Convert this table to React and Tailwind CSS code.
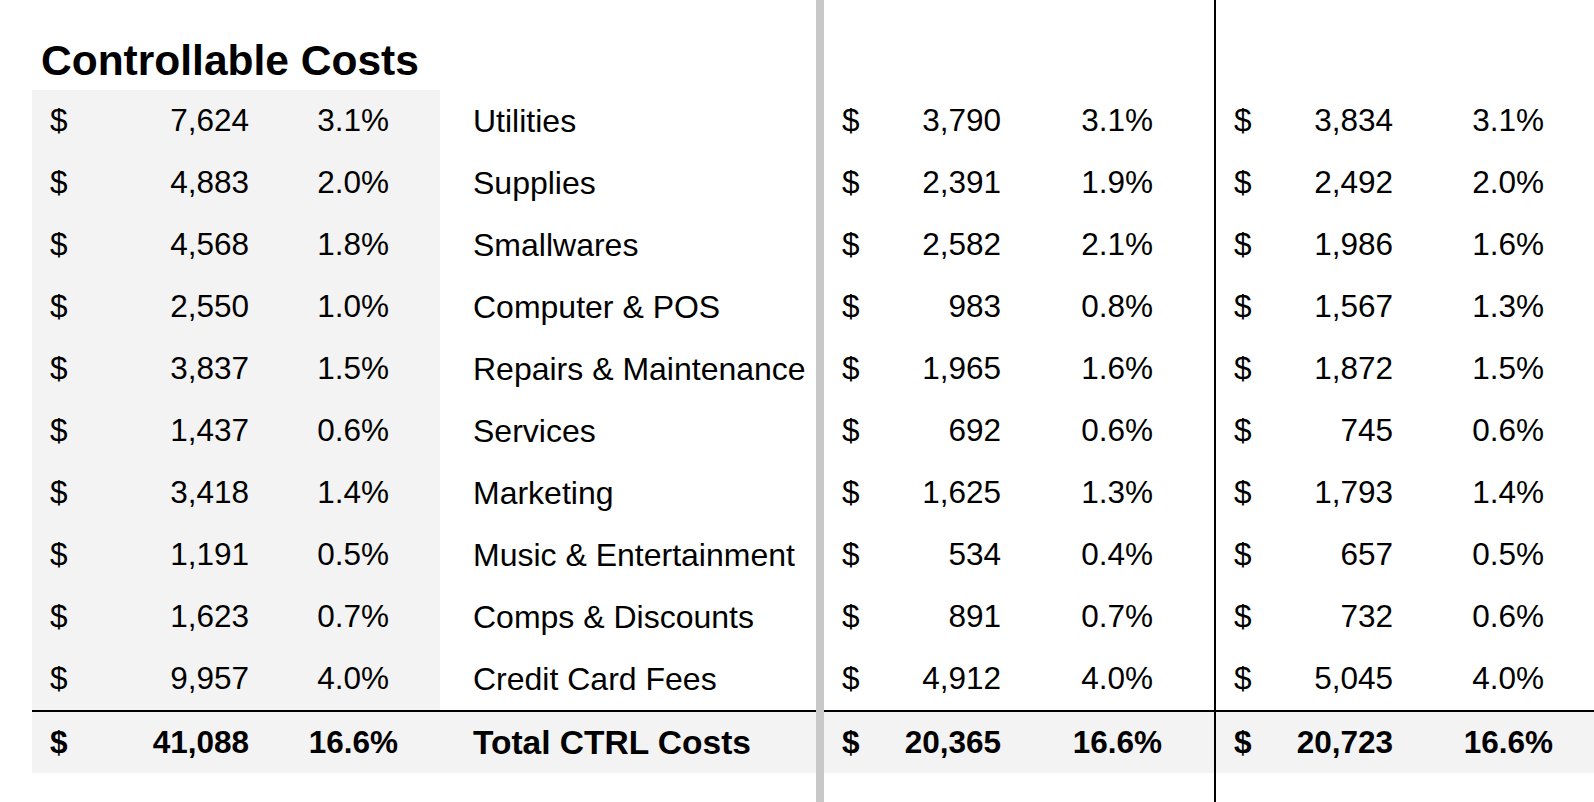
const rows = [
  ["7,624", "3.1%", "Utilities", "3,790", "3.1%", "3,834", "3.1%"],
  ["4,883", "2.0%", "Supplies", "2,391", "1.9%", "2,492", "2.0%"],
  ["4,568", "1.8%", "Smallwares", "2,582", "2.1%", "1,986", "1.6%"],
  ["2,550", "1.0%", "Computer & POS", "983", "0.8%", "1,567", "1.3%"],
  ["3,837", "1.5%", "Repairs & Maintenance", "1,965", "1.6%", "1,872", "1.5%"],
  ["1,437", "0.6%", "Services", "692", "0.6%", "745", "0.6%"],
  ["3,418", "1.4%", "Marketing", "1,625", "1.3%", "1,793", "1.4%"],
  ["1,191", "0.5%", "Music & Entertainment", "534", "0.4%", "657", "0.5%"],
  ["1,623", "0.7%", "Comps & Discounts", "891", "0.7%", "732", "0.6%"],
  ["9,957", "4.0%", "Credit Card Fees", "4,912", "4.0%", "5,045", "4.0%"],
];

const total = ["41,088", "16.6%", "Total CTRL Costs", "20,365", "16.6%", "20,723", "16.6%"];

function Money({ amount, pct, numW, pctW, bold }) {
  return (
    <>
      <div className="w-[18px] shrink-0" />
      <div className={bold ? "w-[40px] font-bold" : "w-[40px]"}>$</div>
      <div className={`text-right ${bold ? "font-bold" : ""}`} style={{ width: numW }}>
        {amount}
      </div>
      <div className={`text-right ${bold ? "font-bold" : ""}`} style={{ width: pctW }}>
        {pct}
      </div>
    </>
  );
}

export default function App() {
  return (
    <div
      className="h-[802px] w-[1594px] overflow-hidden bg-white text-black text-[31.5px] leading-none flex"
      style={{ fontFamily: '"Liberation Sans", Arial, sans-serif' }}
    >
      {/* left block */}
      <div className="ml-[32px] w-[784px] flex flex-col shrink-0">
        <div className="h-[90px] flex items-end pb-[8px] pl-[9px]">
          <h1 className="text-[42.5px] font-bold leading-none">Controllable Costs</h1>
        </div>
        {rows.map((r) => (
          <div key={r[2]} className="h-[62px] flex">
            <div className="w-[408px] bg-[#f3f3f3] flex items-center">
              <Money amount={r[0]} pct={r[1]} numW={159} pctW={140} />
            </div>
            <div className="flex-1 flex items-center pl-[33px] whitespace-nowrap text-[32px]">{r[2]}</div>
          </div>
        ))}
        <div className="h-[2px] bg-black" />
        <div className="h-[61px] bg-[#f3f3f3] flex items-center font-bold">
          <div className="w-[408px] flex items-center">
            <Money amount={total[0]} pct={total[1]} numW={159} pctW={149} bold />
          </div>
          <div className="pl-[33px] text-[33.5px] whitespace-nowrap">{total[2]}</div>
        </div>
      </div>

      <div className="w-[8px] bg-[#c8c8c8] shrink-0" />

      {/* middle block */}
      <div className="w-[390px] flex flex-col shrink-0">
        <div className="h-[90px]" />
        {rows.map((r) => (
          <div key={r[2]} className="h-[62px] flex items-center">
            <Money amount={r[3]} pct={r[4]} numW={119} pctW={152} />
          </div>
        ))}
        <div className="h-[2px] bg-black" />
        <div className="h-[61px] bg-[#f3f3f3] flex items-center">
          <Money amount={total[3]} pct={total[4]} numW={119} pctW={161} bold />
        </div>
      </div>

      <div className="w-[2px] bg-black shrink-0" />

      {/* right block */}
      <div className="flex-1 flex flex-col">
        <div className="h-[90px]" />
        {rows.map((r) => (
          <div key={r[2]} className="h-[62px] flex items-center">
            <Money amount={r[5]} pct={r[6]} numW={119} pctW={151} />
          </div>
        ))}
        <div className="h-[2px] bg-black" />
        <div className="h-[61px] bg-[#f3f3f3] flex items-center">
          <Money amount={total[5]} pct={total[6]} numW={119} pctW={160} bold />
        </div>
      </div>
    </div>
  );
}
